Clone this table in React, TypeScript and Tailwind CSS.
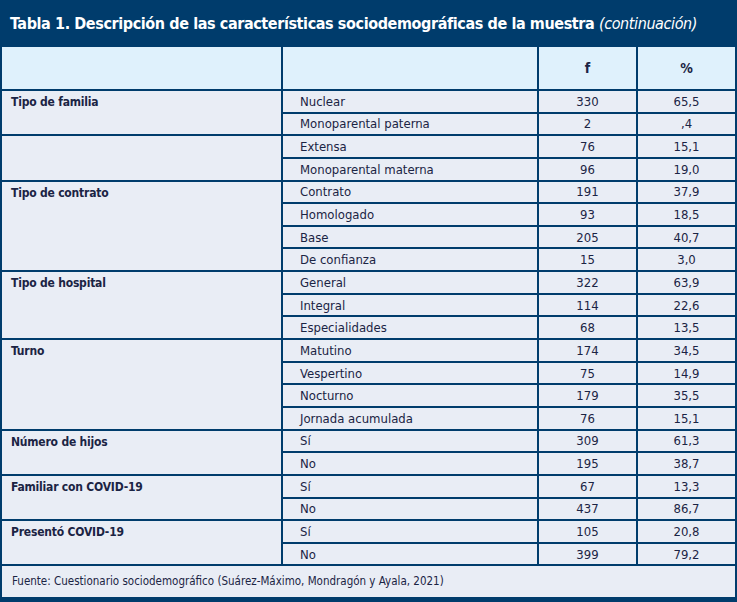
import React from 'react'

interface Row {
  label: string;
  f: string;
  pct: string;
}

interface Group {
  title: string;
  rows: Row[];
}

const groups: Group[] = [
  {
    title: 'Tipo de familia',
    rows: [
      { label: 'Nuclear', f: '330', pct: '65,5' },
      { label: 'Monoparental paterna', f: '2', pct: ',4' },
    ],
  },
  {
    title: '',
    rows: [
      { label: 'Extensa', f: '76', pct: '15,1' },
      { label: 'Monoparental materna', f: '96', pct: '19,0' },
    ],
  },
  {
    title: 'Tipo de contrato',
    rows: [
      { label: 'Contrato', f: '191', pct: '37,9' },
      { label: 'Homologado', f: '93', pct: '18,5' },
      { label: 'Base', f: '205', pct: '40,7' },
      { label: 'De confianza', f: '15', pct: '3,0' },
    ],
  },
  {
    title: 'Tipo de hospital',
    rows: [
      { label: 'General', f: '322', pct: '63,9' },
      { label: 'Integral', f: '114', pct: '22,6' },
      { label: 'Especialidades', f: '68', pct: '13,5' },
    ],
  },
  {
    title: 'Turno',
    rows: [
      { label: 'Matutino', f: '174', pct: '34,5' },
      { label: 'Vespertino', f: '75', pct: '14,9' },
      { label: 'Nocturno', f: '179', pct: '35,5' },
      { label: 'Jornada acumulada', f: '76', pct: '15,1' },
    ],
  },
  {
    title: 'Número de hijos',
    rows: [
      { label: 'Sí', f: '309', pct: '61,3' },
      { label: 'No', f: '195', pct: '38,7' },
    ],
  },
  {
    title: 'Familiar con COVID-19',
    rows: [
      { label: 'Sí', f: '67', pct: '13,3' },
      { label: 'No', f: '437', pct: '86,7' },
    ],
  },
  {
    title: 'Presentó COVID-19',
    rows: [
      { label: 'Sí', f: '105', pct: '20,8' },
      { label: 'No', f: '399', pct: '79,2' },
    ],
  },
]

const spans: Record<number, string> = {
  2: 'row-span-2',
  3: 'row-span-3',
  4: 'row-span-4',
}

const App: React.FC = () => {
  return (
    <div
      className="w-[737px] h-[602px] bg-[#003c6c] px-[2px] pb-[4px] text-[#1b2444]"
      style={{ fontFamily: '"DejaVu Sans Condensed", "DejaVu Sans", sans-serif' }}
    >
      <div className="h-[47px] flex items-center pl-[8px] pt-[1px]">
        <h1 className="text-white text-[16px] font-bold tracking-[-0.4px] whitespace-nowrap">
          Tabla 1. Descripción de las características sociodemográficas de la muestra{' '}
          <span className="italic font-normal">(continuación)</span>
        </h1>
      </div>

      <div className="grid grid-cols-[279px_254px_97px_97px] grid-rows-[42px_repeat(21,20.65px)_31px] gap-[2px] text-[13px] leading-none">
        <div className="bg-[#dff1fc]" />
        <div className="bg-[#dff1fc]" />
        <div className="bg-[#dff1fc] flex items-center justify-center text-[14px] font-semibold">f</div>
        <div className="bg-[#dff1fc] flex items-center justify-center text-[14px] font-semibold">%</div>

        {groups.map((g, gi) => (
          <React.Fragment key={gi}>
            <div className={`${spans[g.rows.length]} bg-[#e9edf5] pl-[9px] pt-[5px] text-[12px] font-bold tracking-[-0.2px]`}>
              {g.title}
            </div>
            {g.rows.map((r, ri) => (
              <React.Fragment key={ri}>
                <div className="bg-[#e9edf5] flex items-center pl-[17px]">{r.label}</div>
                <div className="bg-[#e9edf5] flex items-center justify-center">{r.f}</div>
                <div className="bg-[#e9edf5] flex items-center justify-center">{r.pct}</div>
              </React.Fragment>
            ))}
          </React.Fragment>
        ))}

        <div className="col-span-4 bg-[#e9edf5] flex items-center pl-[10px] text-[11.5px]">
          Fuente: Cuestionario sociodemográfico (Suárez-Máximo, Mondragón y Ayala, 2021)
        </div>
      </div>
    </div>
  )
}

export default App
